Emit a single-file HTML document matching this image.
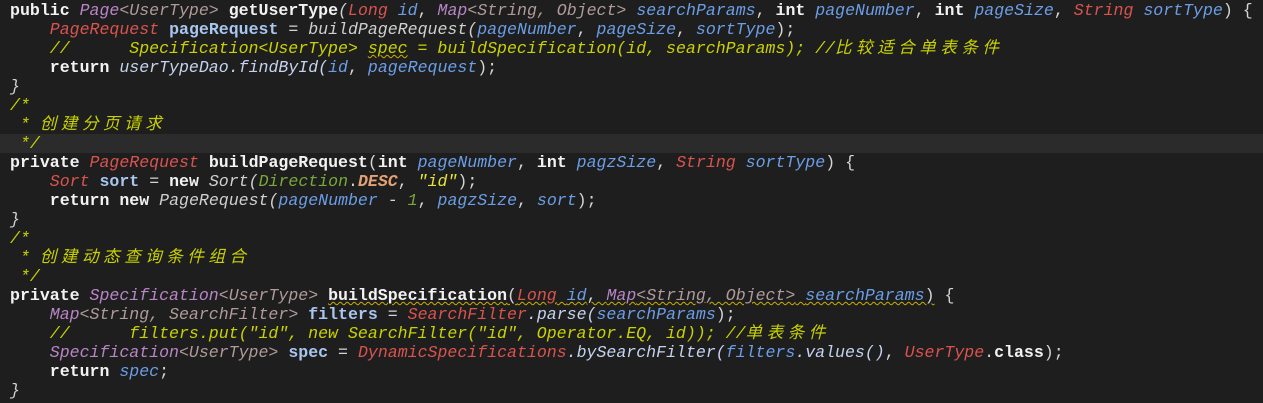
<!DOCTYPE html><html><head><meta charset="utf-8"><style>
body{margin:0;background:#1e1e1e;width:1263px;height:403px;overflow:hidden}
pre{margin:0;position:absolute;left:10px;top:1px;font-family:"Liberation Mono","Noto Sans CJK SC",monospace;font-size:16.57px;line-height:19px;color:#d4d4d4;white-space:pre}
.hl{position:absolute;left:0;top:134px;width:1263px;height:19px;background:#2b2b2b}
.k{color:#f2f2f2;font-weight:bold}
.p{color:#b985c6;font-style:italic}
.g{color:#b09a9a;font-style:italic}
.t{color:#d9534f;font-style:italic}
.a{color:#6b9ee6;font-style:italic}
.v{color:#a8c6ee;font-weight:bold}
.m{color:#c5d3ee;font-style:italic}
.c{color:#c8d200;font-style:italic}
.s{color:#e6e23c;font-style:italic}
.n{color:#7aa83a;font-style:italic}
.d{color:#e2a273;font-weight:bold;font-style:italic}
.w{color:#d0d0d0;font-style:italic}
.f{color:#f2f2f2;font-weight:bold}
.z{letter-spacing:4.5px}
.u{text-decoration:underline wavy #c8b000;text-decoration-thickness:1px}
</style></head><body><div class="hl"></div><pre><span class="k">public</span> <span class="p">Page</span><span class="g">&lt;UserType&gt;</span> <span class="f">getUserType</span><span class="w">(</span><span class="t">Long</span> <span class="a">id</span>, <span class="p">Map</span><span class="g">&lt;String, Object&gt;</span> <span class="a">searchParams</span>, <span class="k">int</span> <span class="a">pageNumber</span>, <span class="k">int</span> <span class="a">pageSize</span>, <span class="t">String</span> <span class="a">sortType</span>) {
    <span class="t">PageRequest</span> <span class="v">pageRequest</span> = <span class="w">buildPageRequest(</span><span class="a">pageNumber</span>, <span class="a">pageSize</span>, <span class="a">sortType</span>);
    <span class="c">//      Specification&lt;UserType&gt; <span class="u">spec</span> = buildSpecification(id, searchParams); //<span class="z">比较适合单表条件</span></span>
    <span class="k">return</span> <span class="m">userTypeDao.findById(</span><span class="a">id</span>, <span class="a">pageRequest</span>);
<span class="w">}</span>
<span class="c">/*</span>
<span class="c"> * <span class="z">创建分页请求</span></span>
<span class="c"> */</span>
<span class="k">private</span> <span class="t">PageRequest</span> <span class="f">buildPageRequest</span>(<span class="k">int</span> <span class="a">pageNumber</span>, <span class="k">int</span> <span class="a">pagzSize</span>, <span class="t">String</span> <span class="a">sortType</span>) {
    <span class="t">Sort</span> <span class="v">sort</span> = <span class="k">new</span> <span class="w">Sort(</span><span class="n">Direction</span>.<span class="d">DESC</span>, <span class="s">"id"</span>);
    <span class="k">return</span> <span class="k">new</span> <span class="w">PageRequest(</span><span class="a">pageNumber</span> - <span class="n">1</span>, <span class="a">pagzSize</span>, <span class="a">sort</span>);
<span class="w">}</span>
<span class="c">/*</span>
<span class="c"> * <span class="z">创建动态查询条件组合</span></span>
<span class="c"> */</span>
<span class="k">private</span> <span class="p">Specification</span><span class="g">&lt;UserType&gt;</span> <span class="f u">buildSpecification</span><span class="u">(<span class="t">Long</span> <span class="a">id</span>, <span class="p">Map</span><span class="g">&lt;String, Object&gt;</span> <span class="a">searchParams</span>)</span> {
    <span class="p">Map</span><span class="g">&lt;String, SearchFilter&gt;</span> <span class="v">filters</span> = <span class="t">SearchFilter</span><span class="m">.parse(</span><span class="a">searchParams</span>);
    <span class="c">//      filters.put("id", new SearchFilter("id", Operator.EQ, id)); //<span class="z">单表条件</span></span>
    <span class="p">Specification</span><span class="g">&lt;UserType&gt;</span> <span class="v">spec</span> = <span class="t">DynamicSpecifications</span><span class="m">.bySearchFilter(</span><span class="a">filters</span><span class="m">.values()</span>, <span class="t">UserType</span>.<span class="k">class</span>);
    <span class="k">return</span> <span class="a">spec</span>;
<span class="w">}</span></pre></body></html>
